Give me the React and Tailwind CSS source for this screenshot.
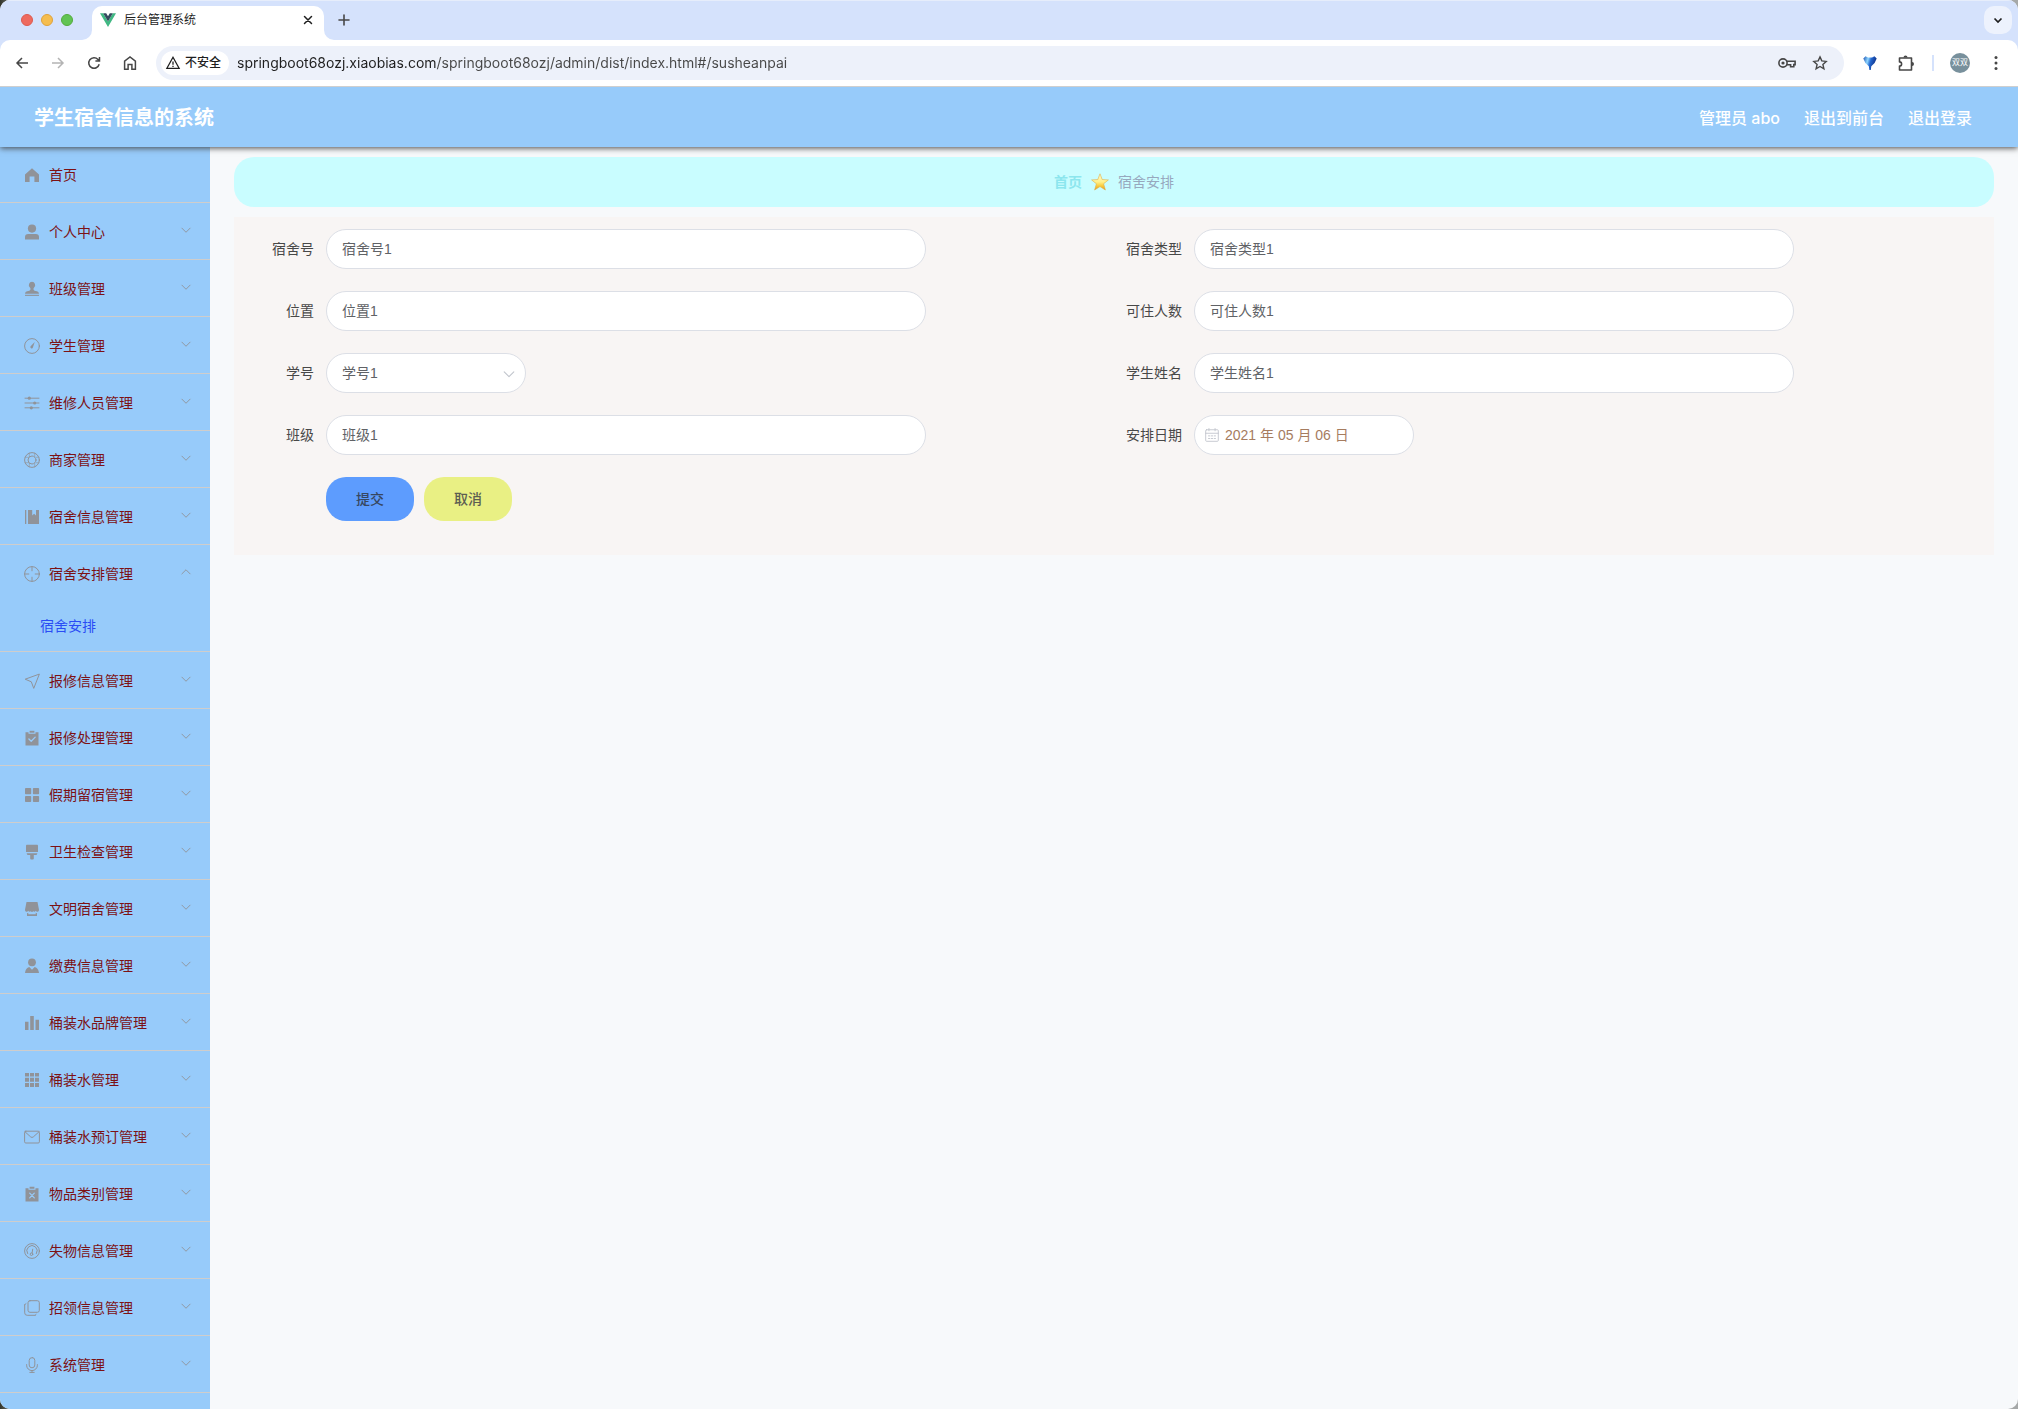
import React from "react";

const svgBase = { viewBox: "0 0 16 16", fill: "none", stroke: "currentColor", strokeLinecap: "round", strokeLinejoin: "round" };

function Icon({ children, className = "size-4", w = 1, ...rest }) {
  return (
    <svg {...svgBase} strokeWidth={w} className={className} aria-hidden="true" {...rest}>
      {children}
    </svg>
  );
}

const solid = { fill: "currentColor", stroke: "none" };

const menuIcons = {
  home: <path {...solid} d="M8 1.2 1 7.4V15h4.6V9.6h4.8V15H15V7.4z" />,
  user: (
    <g {...solid}>
      <circle cx="8" cy="4.6" r="4.1" />
      <path d="M1 15.5v-2.4A3.2 3.2 0 0 1 4.2 9.9h7.6a3.2 3.2 0 0 1 3.2 3.2v2.4z" />
    </g>
  ),
  stamp: (
    <g {...solid}>
      <path d="M8 .8a3.2 3.2 0 0 0-2.100 5.600c.5.5.6 1 .6 1.700 0 1.200-.7 1.700-2 1.800C2.400 10 1.200 10.800 1 12.800h14c-.2-2-1.400-2.800-3.500-2.900-1.300-.1-2-.6-2-1.800 0-.7.1-1.200.6-1.700A3.200 3.200 0 0 0 8 .8z" />
      <path d="M1 13.800h14v1.100H1z" />
    </g>
  ),
  odometer: (
    <>
      <circle cx="8" cy="8" r="7.400" />
      <path {...solid} d="M10.700 3.900 8.900 9.400a1.300 1.300 0 1 1-2.300-1.100z" />
    </>
  ),
  sliders: (
    <>
      <path d="M1 3.200h14M1 8h14M1 12.800h14" />
      <g {...solid}>
        <circle cx="5.300" cy="3.200" r="1.600" />
        <circle cx="10.700" cy="8" r="1.600" />
        <circle cx="7.300" cy="12.800" r="1.600" />
      </g>
    </>
  ),
  help: (
    <>
      <circle cx="8" cy="8" r="7.400" />
      <circle cx="8" cy="8" r="4" />
      <path d="M5.300 1.200v3.600M10.700 1.200v3.600M5.300 11.200v3.600M10.700 11.200v3.600M1.200 5.300h2.600M1.200 10.700h2.600M12.200 5.300h2.600M12.200 10.700h2.600" strokeWidth=".6" />
    </>
  ),
  notebook: (
    <g {...solid}>
      <path d="M1 1h1.300v14H1zM4 1h4.200v5.400l1.900-1.600 1.900 1.600V1h3v14H4z" />
    </g>
  ),
  aim: (
    <>
      <circle cx="8" cy="8" r="7.400" />
      <path d="M8 .8v4M8 11.200v4M.8 8h4M11.200 8h4" />
    </>
  ),
  position: <path d="M15 1.200 1.200 6.200l6.100 2.600 2.300 6.200z" />,
  claim: (
    <>
      <path {...solid} d="M1.500 2.200h3v1.500h7V2.200h3v13.300h-13z" />
      <path {...solid} d="M5.600.8h4.800v1.900H5.600z" />
      <path d="m4.900 9 2.300 2.200 4-4.100" stroke="#97cbfa" strokeWidth="1.300" />
    </>
  ),
  menu: (
    <g {...solid}>
      <rect x="1" y="1" width="6.200" height="6.200" rx=".8" />
      <rect x="8.900" y="1" width="6.200" height="6.200" rx=".8" />
      <rect x="1" y="8.900" width="6.200" height="6.200" rx=".8" />
      <rect x="8.900" y="8.900" width="6.200" height="6.200" rx=".8" />
    </g>
  ),
  brush: (
    <g {...solid}>
      <path d="M2 1.500A.8.800 0 0 1 2.800.7h10.400a.8.800 0 0 1 .8.8v6.600H2z" />
      <path d="M2.700 9.200h10.600c-.1 1.300-.8 1.900-2 1.900H9.800v3.400a.9.900 0 0 1-.9.9H7.100a.9.900 0 0 1-.9-.9v-3.400H4.700c-1.200 0-1.900-.6-2-1.900z" />
    </g>
  ),
  shop: (
    <g {...solid}>
      <path d="M2.500 1h11l1.500 7.800a1.700 1.700 0 0 1-3.200 1 1.800 1.800 0 0 1-2.500.4 1.800 1.800 0 0 1-2.600 0 1.800 1.800 0 0 1-2.500-.4A1.700 1.700 0 0 1 1 8.800z" />
      <path d="M3 12.200c.6 0 1-.1 1.300-.4v1.400h7.400v-1.400c.3.300.7.400 1.300.4v2.800H3z" />
    </g>
  ),
  custom: (
    <g {...solid}>
      <circle cx="8" cy="4.300" r="3.900" />
      <path d="M5.300 9.100 8 11.800l2.700-2.700c2.400.7 4 2.500 4.300 5.900H1c.3-3.400 1.900-5.200 4.300-5.900z" />
    </g>
  ),
  bars: <path {...solid} d="M1 6.800h3.500V15H1zM6.200 1h3.600v14H6.200zM11.500 4.800H15V15h-3.500z" />,
  grid: (
    <path {...solid} d="M1 1h4v3.600H1zM6 1h4v3.600H6zM11 1h4v3.600h-4zM1 5.800h4v4H1zM6 5.800h4v4H6zM11 5.800h4v4h-4zM1 11h4v4H1zM6 11h4v4H6zM11 11h4v4h-4z" />
  ),
  message: (
    <>
      <rect x=".6" y="2.200" width="14.800" height="11.800" rx="1.200" />
      <path d="m.9 2.700 5.800 5.200a2 2 0 0 0 2.600 0l5.800-5.200" />
    </>
  ),
  release: (
    <>
      <path {...solid} d="M1.500 2.200h3v1.500h7V2.200h3v13.300h-13zM5.600.8h4.800v1.900H5.600z" />
      <path d="m5.700 7.200 4.600 4.600M10.300 7.200l-4.600 4.600" stroke="#97cbfa" strokeWidth="1.200" />
    </>
  ),
  dashboard: (
    <>
      <circle cx="8" cy="8" r="7.400" />
      <path d="M3.600 10.600a5.200 5.200 0 1 1 8.800 0" />
      <circle cx="7.500" cy="11.200" r="1.300" />
      <path d="M8.100 10 8.700 6.200" />
    </>
  ),
  copy: (
    <>
      <rect x="4" y=".7" width="11.300" height="11.600" rx="2" />
      <path d="M.7 4.700v8.100a2.500 2.500 0 0 0 2.500 2.500h7.900M.7 4.700 2 3.700M11.100 15.300l1-.9" />
    </>
  ),
  mic: (
    <>
      <rect x="5.200" y=".6" width="5.600" height="10.200" rx="2.800" />
      <path d="M2.600 7.600v.6a5.400 5.400 0 0 0 10.800 0v-.6M8 13.600v1.800M5.800 15.400h4.400" />
    </>
  ),
};

const menu = [
  { icon: "home", text: "首页", leaf: true },
  { icon: "user", text: "个人中心" },
  { icon: "stamp", text: "班级管理" },
  { icon: "odometer", text: "学生管理" },
  { icon: "sliders", text: "维修人员管理" },
  { icon: "help", text: "商家管理" },
  { icon: "notebook", text: "宿舍信息管理" },
  { icon: "aim", text: "宿舍安排管理", children: ["宿舍安排"] },
  { icon: "position", text: "报修信息管理" },
  { icon: "claim", text: "报修处理管理" },
  { icon: "menu", text: "假期留宿管理" },
  { icon: "brush", text: "卫生检查管理" },
  { icon: "shop", text: "文明宿舍管理" },
  { icon: "custom", text: "缴费信息管理" },
  { icon: "bars", text: "桶装水品牌管理" },
  { icon: "grid", text: "桶装水管理" },
  { icon: "message", text: "桶装水预订管理" },
  { icon: "release", text: "物品类别管理" },
  { icon: "dashboard", text: "失物信息管理" },
  { icon: "copy", text: "招领信息管理" },
  { icon: "mic", text: "系统管理" },
];

function TabStrip() {
  return (
    <div className="flex h-10 items-end border-t border-[#e6edfb] bg-[#d5e2fc] pr-1.5">
      <div className="flex h-10 w-[82px] items-center gap-2 pl-[21px]">
        <button aria-label="关闭窗口" className="size-3 rounded-full border border-[#dd5a4f] bg-[#ee6a5f]" />
        <button aria-label="最小化" className="size-3 rounded-full border border-[#dfa23a] bg-[#f5bd4f]" />
        <button aria-label="最大化" className="size-3 rounded-full border border-[#54ab3c] bg-[#61c454]" />
      </div>
      <svg className="size-2.5 text-white" viewBox="0 0 10 10" aria-hidden="true">
        <path fill="currentColor" d="M10 0v10H0A10 10 0 0 0 10 0z" />
      </svg>
      <div className="flex h-[34px] w-[232px] items-center rounded-t-[10px] bg-white pr-2 pb-1.5 pl-2">
        <svg className="size-4" viewBox="0 0 16 16" aria-hidden="true">
          <path fill="#41b883" d="M0 1.200h3.200L8 9.500l4.800-8.300H16L8 15z" />
          <path fill="#35495e" d="M3.200 1.200h3L8 4.300l1.800-3.100h3L8 9.500z" />
        </svg>
        <span className="ml-2 flex-1 text-xs text-[#1f1f1f]">后台管理系统</span>
        <button aria-label="关闭标签页" className="flex size-4 items-center justify-center text-[#1f1f1f]">
          <Icon w={1.5}><path d="m4.500 4.500 7 7M11.500 4.500l-7 7" /></Icon>
        </button>
      </div>
      <svg className="size-2.5 text-white" viewBox="0 0 10 10" aria-hidden="true">
        <path fill="currentColor" d="M0 0v10h10A10 10 0 0 1 0 0z" />
      </svg>
      <button aria-label="新标签页" className="flex h-10 w-5 items-center justify-center text-[#474747]">
        <Icon w={1.600}><path d="M8 3v10M3 8h10" /></Icon>
      </button>
      <button aria-label="搜索标签页" className="mb-1.5 ml-auto flex size-7 items-center justify-center rounded-[10px] bg-[#edf2fd] text-[#1f1f1f]">
        <Icon w={1.700}><path d="m4.500 6.500 3.500 3.500 3.500-3.500" strokeLinecap="butt" strokeLinejoin="miter" /></Icon>
      </button>
    </div>
  );
}

function ToolButton({ label, className = "text-[#474747]", children }) {
  return (
    <button aria-label={label} className={`flex size-7 shrink-0 items-center justify-center ${className}`}>
      {children}
    </button>
  );
}

function Toolbar() {
  return (
    <div className="relative z-20 bg-[#d5e2fc]">
      <div className="flex h-[47px] items-center gap-2 rounded-t-[10px] border-b border-[#cfcfcf] bg-white px-2">
        <ToolButton label="后退">
          <Icon w={1.500}><path d="M14 8H3M8 3 3 8l5 5" strokeLinecap="butt" strokeLinejoin="miter" /></Icon>
        </ToolButton>
        <ToolButton label="前进" className="text-[#b4b4b4]">
          <Icon w={1.500}><path d="M2 8h11M8 3l5 5-5 5" strokeLinecap="butt" strokeLinejoin="miter" /></Icon>
        </ToolButton>
        <ToolButton label="重新加载">
          <Icon w={1.500}><path d="M13.200 9.300A5.300 5.300 0 1 1 12 4.400l1.500 1.500M13.500 2v4.100H9.400" strokeLinecap="butt" strokeLinejoin="miter" /></Icon>
        </ToolButton>
        <ToolButton label="主页">
          <Icon w={1.500}><path d="M2.600 14.200V6.200L8 2l5.400 4.200v8H9.900V9.400H6.100v4.800z" strokeLinejoin="miter" /></Icon>
        </ToolButton>
        <div className="mx-1 flex h-[34px] flex-1 items-center rounded-full bg-[#edf1fa] pr-4 pl-[5px]">
          <button className="flex h-6 items-center gap-1 rounded-full bg-white pr-2 pl-1 text-xs font-medium text-[#1f1f1f]">
            <Icon w={1.300}><path d="M8 2.300 1.900 13.300h12.200zM8 6.500v3.300M8 10.800v1.300" strokeLinecap="butt" strokeLinejoin="miter" /></Icon>
            不安全
          </button>
          <input
            aria-label="地址"
            readOnly
            value="springboot68ozj.xiaobias.com/springboot68ozj/admin/dist/index.html#/susheanpai"
            className="ml-2 h-6 min-w-0 flex-1 bg-[linear-gradient(to_right,#1f1f1f_200px,#474747_200px)] bg-clip-text pb-0.5 font-[Inter,sans-serif] text-sm text-transparent outline-none"
          />
          <div className="flex items-center gap-4 text-[#474747]">
            <button aria-label="密码">
              <svg viewBox="0 0 18 12" fill="none" stroke="currentColor" strokeWidth="1.600" className="h-3 w-[18px]" aria-hidden="true">
                <circle cx="5" cy="6" r="4.100" />
                <circle cx="5" cy="6" r="1.600" fill="currentColor" stroke="none" />
                <path d="M8.600 4.200h8.500v3.400h-1.300v2.200h-3.200V7.700H8.700" />
              </svg>
            </button>
            <button aria-label="收藏">
              <Icon w={1.400}><path d="m8 1.900 1.800 4 4.400.5-3.300 3 1 4.400L8 11.500l-3.900 2.300 1-4.400-3.300-3 4.400-.5z" strokeLinejoin="miter" /></Icon>
            </button>
          </div>
        </div>
        <ToolButton label="扩展">
          <svg viewBox="0 0 16 16" className="size-4" aria-hidden="true">
            <defs>
              <linearGradient id="gem" x1="0" x2="1" y1="0" y2="0.300">
                <stop offset="0" stopColor="#1b4fb0" />
                <stop offset=".38" stopColor="#8fd6ff" />
                <stop offset=".6" stopColor="#2468d0" />
                <stop offset="1" stopColor="#0f2f86" />
              </linearGradient>
            </defs>
            <path fill="url(#gem)" d="M1.300 3.600 3.500 1.200 6 2.600h4l2.500-1.400 2.200 2.400L12.600 8l-3.300 3.200L8.800 15H7.400l-.6-3.800L3.400 8z" />
          </svg>
        </ToolButton>
        <ToolButton label="扩展程序">
          <svg viewBox="0 0 18 18" className="size-[18px]" fill="none" stroke="currentColor" strokeWidth="1.600" aria-hidden="true">
            <path d="M2.500 4h12v12h-12v-3.900a2.100 2.100 0 0 0 0-4.200z" strokeLinejoin="round" />
            <path fill="currentColor" stroke="none" d="M6.500 3.500a2 2 0 0 1 4 0zM15 8a2 2 0 0 1 0 4z" />
          </svg>
        </ToolButton>
        <span className="mx-1 h-4 w-0.5 bg-[#d5e2fc]" />
        <ToolButton label="用户">
          <span className="flex size-5 items-center justify-center rounded-full bg-[#78909c] text-[8px] whitespace-nowrap text-white">双双</span>
        </ToolButton>
        <ToolButton label="更多">
          <Icon><g {...solid}><circle cx="8" cy="2.600" r="1.500" /><circle cx="8" cy="8" r="1.500" /><circle cx="8" cy="13.400" r="1.500" /></g></Icon>
        </ToolButton>
      </div>
    </div>
  );
}

function Sidebar() {
  return (
    <nav className="-mt-px w-[210px] shrink-0 bg-[#97cbfa] text-sm">
      <ul>
        {menu.map((item) => (
          <li key={item.text} className="border-b border-[#cfcdcb]">
            <button className="flex h-14 w-full items-center pt-0.5 pr-[18px] pl-6 text-[#7c1114]">
              <Icon className="size-4 text-[#909399]">{menuIcons[item.icon]}</Icon>
              <span className="ml-[9px] flex-1 text-left">{item.text}</span>
              {!item.leaf && (
                <Icon w={1.2} className="mb-1 size-3 text-[#909399]">
                  <path d={item.children ? "m2.500 10.500 5.500-5.500 5.500 5.500" : "m2.500 5.500 5.500 5.500 5.500-5.500"} />
                </Icon>
              )}
            </button>
            {item.children?.map((child) => (
              <a key={child} href="#/susheanpai" className="flex h-[50px] items-center pl-10 text-[#2a4cf5]">
                {child}
              </a>
            ))}
          </li>
        ))}
      </ul>
    </nav>
  );
}

const inputBox = "h-10 max-w-full rounded-[20px] border border-[#dcdfe6] bg-white text-sm text-[#606266] outline-none";

function Field({ id, label, value, kind }) {
  return (
    <div className="flex">
      <label htmlFor={id} className="w-20 shrink-0 pr-3 text-right leading-10 text-[#484848]">
        {label}
      </label>
      {kind === "select" && (
        <div className="relative w-[200px]">
          <select id={id} defaultValue={value} className={`${inputBox} w-full appearance-none pr-8 pl-[15px]`}>
            <option>{value}</option>
          </select>
          <Icon w={1.200} className="pointer-events-none absolute top-3.5 right-2.5 size-3.5 text-[#c0c4cc]">
            <path d="m2.500 5.500 5.500 5.500 5.500-5.500" />
          </Icon>
        </div>
      )}
      {kind === "date" && (
        <div className={`${inputBox} flex w-[220px] items-center gap-1.5 pl-2.5`}>
          <Icon className="size-3.5 shrink-0 text-[#c0c4cc]">
            <rect x=".8" y="2" width="14.400" height="13.200" rx="1" />
            <path d="M.8 6h14.400M4.500.6v2.600M11.500.6v2.600" />
            <path d="M4 9h1.500M7.200 9h1.500M10.500 9H12M4 12h1.500M7.200 12h1.500M10.500 12H12" />
          </Icon>
          <input id={id} defaultValue={value} className="w-0 flex-1 bg-transparent text-[#a67c5f] outline-none" />
        </div>
      )}
      {!kind && <input id={id} defaultValue={value} className={`${inputBox} w-[600px] px-[15px] pb-0.5`} />}
    </div>
  );
}

function Breadcrumb() {
  return (
    <nav aria-label="面包屑" className="flex h-[50px] items-center justify-center gap-[9px] rounded-[20px] bg-[#c9fdff] text-sm">
      <a href="#/" className="font-bold text-[#8ce6ee]">首页</a>
      <svg viewBox="0 0 18 18" className="size-[18px]" aria-hidden="true">
        <defs>
          <linearGradient id="star" x1="0" x2="0" y1="0" y2="1">
            <stop offset="0" stopColor="#fffbd0" />
            <stop offset=".5" stopColor="#fff08a" />
            <stop offset=".75" stopColor="#f9cb3c" />
            <stop offset="1" stopColor="#e5951a" />
          </linearGradient>
        </defs>
        <path fill="url(#star)" stroke="#dfb04a" strokeWidth=".6" strokeLinejoin="round" d="m9 .8 2.200 5.700 6.200.4-4.800 3.900 1.800 6.200L9 13.600 3.600 17l1.800-6.200L.6 6.900l6.200-.4z" />
      </svg>
      <span className="text-[#97a8be]">宿舍安排</span>
    </nav>
  );
}

export default function App() {
  return (
    <div className="min-h-screen bg-[linear-gradient(to_right,#33352c,#a5a8a8_20px)]">
      <div className="flex min-h-screen flex-col overflow-hidden rounded-[10px] bg-[#f7f9fb] font-['Liberation_Sans','Noto_Sans_CJK_SC',sans-serif]">
        <TabStrip />
        <Toolbar />
        <header className="relative z-10 flex h-[60px] items-center justify-between bg-[#97cbfa] pt-0.5 pr-[46px] pl-[34px] text-white shadow-[0_1px_6px_#444444]">
          <h1 className="text-xl font-bold">学生宿舍信息的系统</h1>
          <div className="flex gap-6 font-[Inter,'Noto_Sans_CJK_SC',sans-serif] text-base font-medium">
            <span>管理员 abo</span>
            <button>退出到前台</button>
            <button>退出登录</button>
          </div>
        </header>
        <div className="flex flex-1">
          <Sidebar />
          <main className="min-w-0 flex-1 px-6 py-2.5">
            <Breadcrumb />
            <form className="mt-2.5 bg-[#f8f5f4] p-3 text-sm" onSubmit={(e) => e.preventDefault()}>
              <div className="grid grid-cols-2 gap-y-[22px]">
                <Field id="room" label="宿舍号" value="宿舍号1" />
                <Field id="type" label="宿舍类型" value="宿舍类型1" />
                <Field id="place" label="位置" value="位置1" />
                <Field id="capacity" label="可住人数" value="可住人数1" />
                <Field id="number" label="学号" value="学号1" kind="select" />
                <Field id="name" label="学生姓名" value="学生姓名1" />
                <Field id="class" label="班级" value="班级1" />
                <Field id="date" label="安排日期" value="2021 年 05 月 06 日" kind="date" />
              </div>
              <div className="my-[22px] flex gap-2.5 pl-20 font-medium">
                <button type="submit" className="h-11 w-[88px] rounded-[20px] bg-[#5d9cfe] text-[#374760]">提交</button>
                <button type="button" className="h-11 w-[88px] rounded-[20px] bg-[#e9f084] text-[#5c5e52]">取消</button>
              </div>
            </form>
          </main>
        </div>
      </div>
    </div>
  );
}
